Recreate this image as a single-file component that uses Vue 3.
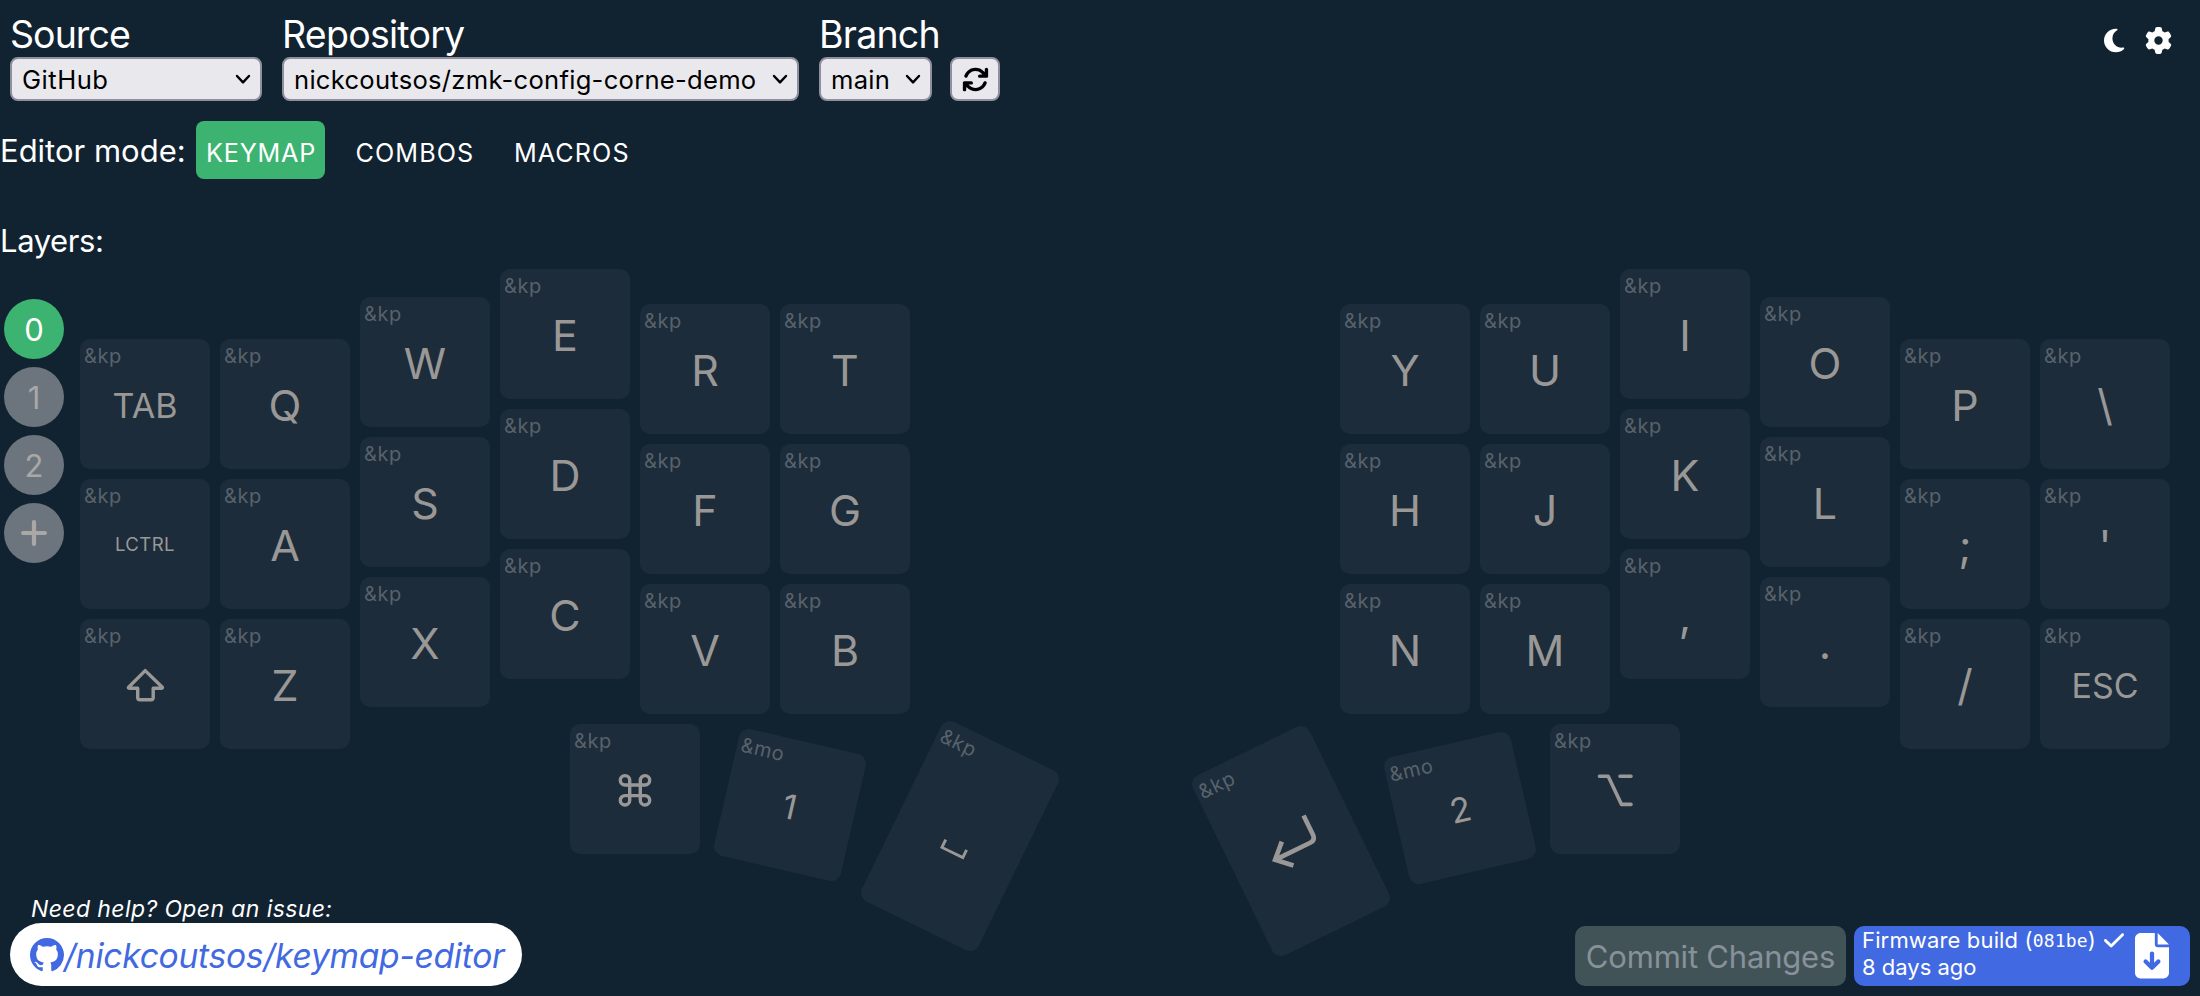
<script setup>
const U = 140

const modes = [
  { name: 'KEYMAP', active: true },
  { name: 'COMBOS', active: false },
  { name: 'MACROS', active: false }
]

const layers = [0, 1, 2]

// Column-staggered halves: x in key units, y in pixels from the top of the board
const columns = [
  { x: 0, y: 70, keys: ['TAB', 'LCTRL', 'shift'] },
  { x: 1, y: 70, keys: ['Q', 'A', 'Z'] },
  { x: 2, y: 28, keys: ['W', 'S', 'X'] },
  { x: 3, y: 0, keys: ['E', 'D', 'C'] },
  { x: 4, y: 35, keys: ['R', 'F', 'V'] },
  { x: 5, y: 35, keys: ['T', 'G', 'B'] },
  { x: 9, y: 35, keys: ['Y', 'H', 'N'] },
  { x: 10, y: 35, keys: ['U', 'J', 'M'] },
  { x: 11, y: 0, keys: ['I', 'K', ','] },
  { x: 12, y: 28, keys: ['O', 'L', '.'] },
  { x: 13, y: 70, keys: ['P', ';', '/'] },
  { x: 14, y: 70, keys: ['\\', "'", 'ESC'] }
]

const thumbs = [
  { label: 'command', bind: '&kp', x: 490, y: 455, h: 130, r: 0 },
  { label: '1', bind: '&mo', x: 645.2, y: 471.3, h: 130, r: 13, mid: true },
  { label: 'space', bind: '&kp', x: 814.7, y: 467.2, h: 200, r: 26 },
  { label: 'enter', bind: '&kp', x: 1146.3, y: 471.8, h: 200, r: -26 },
  { label: '2', bind: '&mo', x: 1315.2, y: 473.8, h: 130, r: -13, mid: true },
  { label: 'option', bind: '&kp', x: 1470, y: 455, h: 130, r: 0 }
]

const icons = {
  shift: { w: 3.4, d: 'M65.2 51.6L48.6 68.2q-.6 1 .6 1h8.5V78.5q0 2.2 2.2 2.2H71q2.2 0 2.2-2.2V69.2h8.5q1.2 0 .6-1z' },
  command: { w: 3.4, d: 'M55 61H75a4.7 4.7 0 1 0-4.7-4.7V76.3a4.7 4.7 0 1 0 4.7-4.7H55a4.7 4.7 0 1 0 4.7 4.7V56.3a4.7 4.7 0 1 0-4.7 4.7z' },
  option: { w: 3.6, round: true, d: 'M49.5 52.3H58.2L71.5 80.4H81M70 52.3H81' },
  space: { w: 2.9, square: true, d: 'M53.8 109.6V118.2H77V109.6' },
  enter: { w: 4.7, square: true, d: 'M87.5 82.5V104q0 6-6 6H43M56.5 96.5L42.5 109.9 56.5 123' }
}

const keys = [
  ...columns.flatMap(c =>
    c.keys.map((label, i) => ({ label, bind: '&kp', x: c.x * U, y: c.y + i * U, h: 130, r: 0 }))
  ),
  ...thumbs
]

const legendSize = k => {
  if (k.label.length > 3) return 'small'
  return k.mid || k.label.length > 1 ? 'medium' : 'large'
}

const place = k => ({
  left: k.x + 'px',
  top: k.y + 'px',
  height: k.h + 'px',
  transform: k.r ? `rotate(${k.r}deg)` : null
})
</script>

<template>
  <div class="page">
    <header class="top">
      <label class="field source">
        <span class="caption">Source</span>
        <span class="select"><span class="value">GitHub</span>
          <svg class="chevron" viewBox="0 0 14 9"><path d="M1 1L7 7.4 13 1" /></svg></span>
      </label>
      <label class="field repository">
        <span class="caption">Repository</span>
        <span class="select"><span class="value">nickcoutsos/zmk-config-corne-demo</span>
          <svg class="chevron" viewBox="0 0 14 9"><path d="M1 1L7 7.4 13 1" /></svg></span>
      </label>
      <label class="field branch">
        <span class="caption">Branch</span>
        <span class="select"><span class="value">main</span>
          <svg class="chevron" viewBox="0 0 14 9"><path d="M1 1L7 7.4 13 1" /></svg></span>
      </label>
      <button class="refresh" aria-label="Refresh">
        <svg width="27" height="27" viewBox="0 0 512 512"><path d="M105.1 202.6c7.7-21.8 20.2-42.3 37.8-59.8c62.5-62.5 163.8-62.5 226.3 0L386.3 160H336c-17.7 0-32 14.3-32 32s14.3 32 32 32H463.5h.4c17.7 0 32-14.3 32-32V64c0-17.7-14.3-32-32-32s-32 14.3-32 32v51.2L414.4 97.6c-87.5-87.5-229.3-87.5-316.8 0C73.2 122 55.6 150.7 44.8 181.4c-5.9 16.7 2.9 34.9 19.5 40.8s34.9-2.9 40.8-19.5zM39 289.3c-5 1.5-9.8 4.2-13.7 8.2c-4 4-6.7 8.8-8.1 14c-.3 1.2-.6 2.5-.8 3.8c-.3 1.7-.4 3.4-.4 5.1V448c0 17.7 14.3 32 32 32s32-14.3 32-32V396.9l17.6 17.5c87.5 87.4 229.3 87.4 316.7 0c24.4-24.4 42.1-53.1 52.9-83.7c5.9-16.7-2.9-34.9-19.5-40.8s-34.9 2.9-40.8 19.5c-7.7 21.8-20.2 42.3-37.8 59.8c-62.5 62.5-163.8 62.5-226.3 0l-.1-.1L125.6 352H176c17.7 0 32-14.3 32-32s-14.3-32-32-32H48.4c-1.6 0-3.2 .1-4.8 .3s-3.1 .5-4.6 1z" /></svg>
      </button>
      <div class="tools">
        <svg width="20.25" height="27" viewBox="0 0 384 512"><path d="M223.5 32C100 32 0 132.3 0 256S100 480 223.5 480c60.6 0 115.5-24.2 155.8-63.4c5-4.9 6.3-12.5 3.1-18.7s-10.1-9.7-17-8.5c-9.8 1.7-19.8 2.6-30.1 2.6c-96.9 0-175.5-78.8-175.5-176c0-65.8 36-123.1 89.3-153.3c6.1-3.5 9.2-10.5 7.7-17.3s-7.3-11.9-14.3-12.5c-6.3-.5-12.6-.8-19-.8z" /></svg>
        <svg width="27" height="27" viewBox="0 0 512 512"><path d="M495.9 166.6c3.2 8.7 .5 18.4-6.4 24.6l-43.3 39.4c1.1 8.3 1.7 16.8 1.7 25.4s-.6 17.1-1.7 25.4l43.3 39.4c6.9 6.2 9.6 15.9 6.4 24.6c-4.4 11.9-9.7 23.3-15.8 34.3l-4.7 8.1c-6.6 11-14 21.4-22.1 31.2c-5.9 7.2-15.7 9.6-24.5 6.8l-55.7-17.7c-13.4 10.3-28.2 18.9-44 25.4l-12.5 57.1c-2 9.1-9 16.3-18.2 17.8c-13.8 2.3-28 3.5-42.5 3.5s-28.7-1.2-42.5-3.5c-9.2-1.5-16.2-8.7-18.2-17.8l-12.5-57.1c-15.8-6.5-30.6-15.1-44-25.4L83.1 425.9c-8.8 2.8-18.6 .3-24.5-6.8c-8.1-9.8-15.5-20.2-22.1-31.2l-4.7-8.1c-6.1-11-11.4-22.4-15.8-34.3c-3.2-8.7-.5-18.4 6.4-24.6l43.3-39.4C64.6 273.1 64 264.6 64 256s.6-17.1 1.7-25.4L22.4 191.2c-6.9-6.2-9.6-15.9-6.4-24.6c4.4-11.9 9.7-23.3 15.8-34.3l4.7-8.1c6.6-11 14-21.4 22.1-31.2c5.9-7.2 15.7-9.6 24.5-6.8l55.7 17.7c13.4-10.3 28.2-18.9 44-25.4l12.5-57.1c2-9.1 9-16.3 18.2-17.8C227.3 1.2 241.5 0 256 0s28.7 1.2 42.5 3.5c9.2 1.5 16.2 8.7 18.2 17.8l12.5 57.1c15.8 6.5 30.6 15.1 44 25.4l55.7-17.7c8.8-2.8 18.6-.3 24.5 6.8c8.1 9.8 15.5 20.2 22.1 31.2l4.7 8.1c6.1 11 11.4 22.4 15.8 34.3zM256 336a80 80 0 1 0 0-160 80 80 0 1 0 0 160z" /></svg>
      </div>
    </header>

    <nav class="modes">
      <span class="modes-label">Editor mode:</span>
      <button v-for="m in modes" :key="m.name" class="mode" :class="[m.name.toLowerCase(), { active: m.active }]">{{ m.name }}</button>
    </nav>

    <main class="workspace">
      <aside class="layers">
        <p class="layers-label">Layers:</p>
        <div class="layer-list">
          <button v-for="l in layers" :key="l" class="layer" :class="{ active: l === 0 }">{{ l }}</button>
          <button class="layer" aria-label="Add layer">
            <svg width="26" height="26" viewBox="0 0 26 26"><path class="plus" d="M13 2.1V23.9M2.1 13H23.9" /></svg>
          </button>
        </div>
      </aside>
      <section class="board">
        <div v-for="(k, i) in keys" :key="i" class="key" :style="place(k)">
          <span class="bind">{{ k.bind }}</span>
          <svg v-if="icons[k.label]" class="glyph" :class="{ round: icons[k.label].round, square: icons[k.label].square }" width="130" :height="k.h" :viewBox="`0 0 130 ${k.h}`">
            <path :d="icons[k.label].d" :stroke-width="icons[k.label].w" />
          </svg>
          <span v-else class="legend" :class="legendSize(k)">{{ k.label }}</span>
        </div>
      </section>
    </main>

    <footer class="bottom">
      <div class="help">
        <span class="help-text">Need help? Open an issue:</span>
        <a class="repo-link">
          <svg width="34" height="34" viewBox="0 0 16 16"><path d="M8 0C3.58 0 0 3.58 0 8c0 3.54 2.29 6.53 5.47 7.59.4.07.55-.17.55-.38 0-.19-.01-.82-.01-1.49-2.01.37-2.53-.49-2.69-.94-.09-.23-.48-.94-.82-1.13-.28-.15-.68-.52-.01-.53.63-.01 1.08.58 1.23.82.72 1.21 1.87.87 2.33.66.07-.52.28-.87.51-1.07-1.78-.2-3.64-.89-3.64-3.95 0-.87.31-1.59.82-2.15-.08-.2-.36-1.02.08-2.12 0 0 .67-.21 2.2.82.64-.18 1.32-.27 2-.27.68 0 1.36.09 2 .27 1.53-1.04 2.2-.82 2.2-.82.44 1.1.16 1.92.08 2.12.51.56.82 1.27.82 2.15 0 3.07-1.87 3.75-3.65 3.95.29.25.54.73.54 1.48 0 1.07-.01 1.93-.01 2.2 0 .21.15.46.55.38A8.013 8.013 0 0 0 16 8c0-4.42-3.58-8-8-8z" /></svg>
          <span>/nickcoutsos/keymap-editor</span>
        </a>
      </div>
      <div class="actions">
        <button class="commit" disabled>Commit Changes</button>
        <a class="build">
          <span class="build-text">
            <span class="build-line">Firmware build (<code>081be</code>)<svg class="check" width="20" height="22.8" viewBox="0 0 448 512"><path d="M438.6 105.4c12.5 12.5 12.5 32.8 0 45.3l-256 256c-12.5 12.5-32.8 12.5-45.3 0l-128-128c-12.5-12.5-12.5-32.8 0-45.3s32.8-12.5 45.3 0L160 338.7 393.4 105.4c12.5-12.5 32.8-12.5 45.3 0z" /></svg></span>
            <span class="build-line age">8 days ago</span>
          </span>
          <svg width="34" height="45.5" viewBox="0 0 384 512"><path d="M64 0C28.7 0 0 28.7 0 64V448c0 35.3 28.7 64 64 64H320c35.3 0 64-28.7 64-64V160H256c-17.7 0-32-14.3-32-32V0H64zM256 0V128H384L256 0zM216 232V334.1l31-31c9.4-9.4 24.6-9.4 33.9 0s9.4 24.6 0 33.9l-72 72c-9.4 9.4-24.6 9.4-33.9 0l-72-72c-9.4-9.4-9.4-24.6 0-33.9s24.6-9.4 33.9 0l31 31V232c0-13.3 10.7-24 24-24s24 10.7 24 24z" /></svg>
        </a>
      </div>
    </footer>
  </div>
</template>

<style>
body { background: #112231; }
</style>

<style scoped>
.page {
  box-sizing: border-box;
  width: 2200px;
  height: 996px;
  overflow: hidden;
  display: flex;
  flex-direction: column;
  background: #112231;
  color: #fff;
  font-family: Inter, "Liberation Sans", sans-serif;
}
button { font-family: inherit; margin: 0; border: 0; color: inherit; }
svg { display: block; flex: none; fill: currentColor; }

.top { display: flex; align-items: flex-end; height: 101px; padding: 0 28px 0 10px; }
.field { display: flex; flex-direction: column; margin-right: 20px; }
.caption { height: 45px; line-height: 45px; font-size: 37.5px; letter-spacing: -0.75px; white-space: nowrap; }
.source .caption { letter-spacing: -0.95px; }
.select, .refresh {
  box-sizing: border-box;
  height: 44px;
  display: flex;
  align-items: center;
  background: #e9e9ed;
  border: 2px solid #8f8f9d;
  border-radius: 8px;
  color: #000;
}
.select { justify-content: space-between; padding: 0 10px; font-size: 25.6px; letter-spacing: 0.26px; white-space: nowrap; }
.source .select { width: 252px; letter-spacing: 0.5px; }
.repository .select { width: 517px; }
.branch { width: 113px; margin-right: 18px; }
.chevron { width: 14px; height: 9px; overflow: visible; fill: none; stroke: #000; stroke-width: 2.4; stroke-linecap: round; stroke-linejoin: round; }
.refresh { width: 50px; justify-content: center; padding: 0; }
.tools { display: flex; gap: 20.5px; margin-left: auto; margin-bottom: 46.8px; }

.modes { display: flex; align-items: stretch; height: 58px; margin-top: 20px; }
.modes-label { width: 196px; line-height: 59px; font-size: 31px; }
.mode { box-sizing: border-box; padding: 5px 0 0 10px; text-align: left; background: none; border-radius: 8px; font-size: 25.2px; letter-spacing: 1.05px; }
.mode.active { background: #3cb371; }
.mode.keymap { width: 129px; margin-right: 20px; letter-spacing: 0.8px; }
.mode.combos { width: 139px; margin-right: 20px; padding-left: 10.6px; }
.mode.macros { width: 140px; }

.workspace { display: flex; height: 714px; }
.layers { width: 80px; }
.layers-label { margin: 42px 0 38px; line-height: 40px; font-size: 31px; letter-spacing: -0.4px; white-space: nowrap; }
.layer-list { display: flex; flex-direction: column; gap: 8px; padding-left: 4px; }
.layer {
  width: 60px;
  height: 60px;
  display: flex;
  align-items: center;
  justify-content: center;
  padding: 0;
  border-radius: 50%;
  background: #6c757e;
  color: #a9a8a6;
  font-size: 31px;
}
.layer.active { background: #3cb371; color: #fff; }
.plus { fill: none; stroke: currentColor; stroke-width: 4.2; stroke-linecap: round; }

.board { position: relative; flex: 1; margin-top: 90px; }
.key {
  position: absolute;
  width: 130px;
  display: flex;
  align-items: center;
  justify-content: center;
  background: #1d2c3a;
  border-radius: 10px;
  color: #9a9896;
}
.bind { position: absolute; left: 4px; top: 5px; line-height: 24px; font-size: 20px; letter-spacing: 0.6px; color: #58626b; }
.legend { line-height: 52px; padding-top: 2px; }
.large { font-size: 43px; }
.medium { font-size: 34px; padding-top: 3px; }
.small { font-size: 18.6px; letter-spacing: 0.4px; padding-top: 0; }
.glyph { position: absolute; inset: 0; fill: none; stroke: currentColor; stroke-linejoin: round; }
.glyph.round { stroke-linecap: round; }
.glyph.square { stroke-linejoin: miter; }

.bottom { position: relative; display: flex; justify-content: space-between; align-items: flex-end; margin-top: auto; padding: 0 10px 10px; }
.help { display: flex; flex-direction: column; font-style: italic; }
.help-text { margin-left: 21px; line-height: 28px; font-size: 23px; letter-spacing: 0.39px; }
.repo-link {
  box-sizing: border-box;
  width: 512px;
  height: 63px;
  display: flex;
  align-items: center;
  padding-left: 20px;
  border-radius: 32px;
  background: #fff;
  color: #4169e1;
  font-size: 33.6px;
  letter-spacing: -0.27px;
  white-space: nowrap;
}
.repo-link span { padding-top: 2px; }
.actions { display: flex; gap: 8px; }
.commit { width: 271px; height: 60px; padding: 1px 0 0; border-radius: 10px; background: #425358; color: #87919a; font-size: 31px; letter-spacing: -0.2px; white-space: nowrap; }
.build { box-sizing: border-box; width: 336px; height: 60px; display: flex; align-items: center; justify-content: space-between; padding: 0 21px 0 8px; border-radius: 10px; background: #4169e1; }
.build-text { display: flex; flex-direction: column; padding-bottom: 5px; font-size: 22px; letter-spacing: 0.15px; }
.build-line { display: flex; align-items: center; height: 27px; white-space: pre; }
.build-line code { font-family: "DejaVu Sans Mono", monospace; font-size: 18px; }
.build-line.age { letter-spacing: 0; }
.check { margin-left: 8px; }
</style>
